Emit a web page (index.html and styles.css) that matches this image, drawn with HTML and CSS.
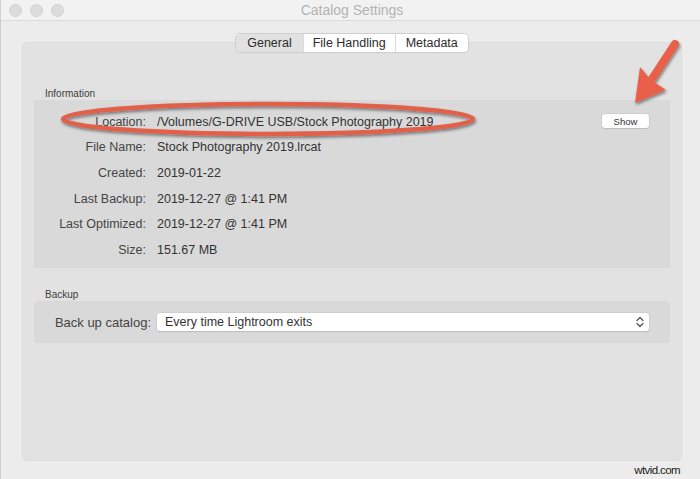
FILE: index.html
```html
<!DOCTYPE html>
<html>
<head>
<meta charset="utf-8">
<link rel="stylesheet" href="styles.css">
</head>
<body>
<div class="window">
  <div class="titlebar">
    <div class="lights"><span class="light"></span><span class="light"></span><span class="light"></span></div>
    <div class="title">Catalog Settings</div>
  </div>
  <div class="content">
    <div class="tabs">
      <span class="tab active">General</span>
      <span class="tab">File Handling</span>
      <span class="tab">Metadata</span>
    </div>
    <div class="panel">
      <div class="group-label">Information</div>
      <div class="group info">
        <div class="row"><span class="label">Location:</span><span class="value">/Volumes/G-DRIVE USB/Stock Photography 2019</span><button class="show">Show</button></div>
        <div class="row"><span class="label">File Name:</span><span class="value">Stock Photography 2019.lrcat</span></div>
        <div class="row"><span class="label">Created:</span><span class="value">2019-01-22</span></div>
        <div class="row"><span class="label">Last Backup:</span><span class="value">2019-12-27 @ 1:41 PM</span></div>
        <div class="row"><span class="label">Last Optimized:</span><span class="value">2019-12-27 @ 1:41 PM</span></div>
        <div class="row"><span class="label">Size:</span><span class="value">151.67 MB</span></div>
      </div>
      <div class="group-label backup-label">Backup</div>
      <div class="group backup">
        <span class="label blabel">Back up catalog:</span>
        <div class="select">
          <span>Every time Lightroom exits</span>
          <svg class="chev" width="8" height="12" viewBox="0 0 8 12"><path d="M1 4.5 L4 1.5 L7 4.5 M1 7.5 L4 10.5 L7 7.5" fill="none" stroke="#555" stroke-width="1.3" stroke-linecap="round" stroke-linejoin="round"/></svg>
        </div>
      </div>
    </div>
    <div class="footer"><span class="watermark">wtvid.com</span></div>
  </div>
  <svg class="annot" width="700" height="479" viewBox="0 0 700 479">
    <defs>
      <filter id="sh" x="-20%" y="-50%" width="140%" height="200%">
        <feDropShadow dx="1" dy="2" stdDeviation="1.5" flood-color="#000" flood-opacity="0.45"/>
      </filter>
    </defs>
    <g filter="url(#sh)">
      <ellipse cx="268" cy="119" rx="205" ry="15" fill="none" stroke="#e2614a" stroke-width="4.5"/>
      <path d="M675 44 L650 82" stroke="#e8614a" stroke-width="8" stroke-linecap="round" fill="none"/>
      <path d="M635 103 L640 67 L651 80 L666 90 Z" fill="#e8614a"/>
    </g>
  </svg>
</div>
</body>
</html>
```
FILE: styles.css
```css
* { box-sizing: border-box; }
html, body { margin: 0; padding: 0; }
body {
  width: 700px;
  height: 479px;
  overflow: hidden;
  background: #ececec;
  font-family: "Liberation Sans", Arial, sans-serif;
  color: #3a3a3a;
}
.window {
  position: relative;
  width: 700px;
  height: 479px;
  border-left: 1px solid #cfcfcf;
}
.titlebar {
  height: 21px;
  display: flex;
  align-items: center;
  background: #f2f2f2;
  border-bottom: 1px solid #dadada;
  position: relative;
}
.lights {
  display: flex;
  gap: 8px;
  padding-left: 8px;
}
.light {
  width: 13px;
  height: 13px;
  border-radius: 50%;
  background: #dcdcdc;
  border: 1px solid #d2d2d2;
}
.title {
  flex: 1;
  text-align: center;
  font-size: 14px;
  color: #b2b2b2;
  margin-right: 60px;
}
.content {
  padding: 13px 18px 0 21px;
}
.tabs {
  position: relative;
  z-index: 1;
  display: flex;
  width: max-content;
  margin: 0 auto -10px;
  font-size: 12.5px;
  border-radius: 4px;
  box-shadow: 0 0 0 1px #cfcfcf, 0 1px 1px rgba(0,0,0,0.12);
  background: #fff;
  overflow: hidden;
}
.tab {
  height: 18px;
  line-height: 18px;
  padding: 0 10px;
  color: #2b2b2b;
  border-left: 1px solid #dadada;
}
.tab:first-child { border-left: none; }
.tab.active { background: #e1e1e1; padding: 0 11px; }
.tab:nth-child(2) { padding: 0 9px; }
.tab:nth-child(3) { padding: 0 10px; }
.panel {
  height: 419px;
  background: #e2e2e2;
  border: 1px solid #dcdcdc;
  border-radius: 5px;
  padding: 0 11px;
}
.group-label {
  font-size: 10px;
  color: #3d3d3d;
  padding: 45px 0 0 11px;
  height: 57px;
}
.backup-label { padding-top: 21px; height: 33px; }
.group {
  background: #d9d9d9;
  border-radius: 4px;
}
.info {
  height: 168px;
  padding: 9px 21px 5px 0;
}
.row {
  display: flex;
  align-items: center;
  height: 25.6px;
  font-size: 12.5px;
}
.label {
  width: 112px;
  text-align: right;
  color: #444;
  flex: none;
}
.value {
  margin-left: 11px;
  flex: 1;
  color: #333;
}
.show {
  font-family: inherit;
  font-size: 9.5px;
  color: #333;
  background: #fff;
  border: none;
  border-radius: 3px;
  box-shadow: 0 0 0 0.5px #c4c4c4, 0 1px 1px rgba(0,0,0,0.15);
  width: 47px;
  height: 14px;
  padding: 0;
  margin-top: -1px;
}
.backup {
  height: 42px;
  display: flex;
  align-items: center;
  padding-right: 21px;
}
.blabel {
  width: 117px;
  font-size: 13px;
}
.select {
  margin-left: 6px;
  flex: 1;
  height: 18px;
  background: #fff;
  border-radius: 3px;
  box-shadow: 0 0 0 0.5px #c4c4c4, 0 1px 1px rgba(0,0,0,0.15);
  display: flex;
  align-items: center;
  justify-content: space-between;
  padding: 0 5px 0 8px;
  font-size: 12.5px;
  color: #333;
}
.footer {
  height: 18px;
  display: flex;
  justify-content: flex-end;
  align-items: center;
  padding-right: 2px;
}
.watermark {
  font-size: 11.5px;
  color: #222;
  letter-spacing: -0.6px;
}
.annot {
  position: absolute;
  left: -1px;
  top: 0;
  pointer-events: none;
}
```
